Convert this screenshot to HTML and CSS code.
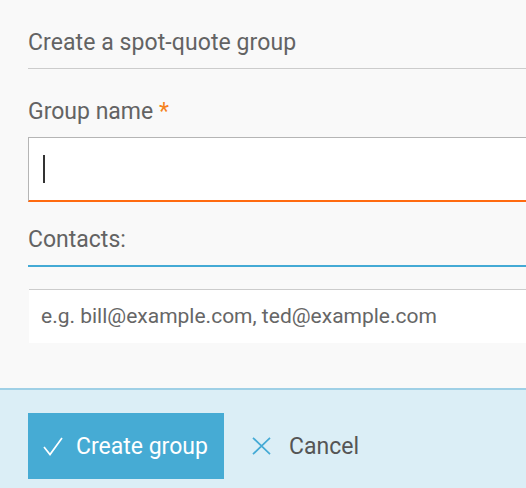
FILE: index.html
```html
<!DOCTYPE html>
<html>
<head>
<meta charset="utf-8">
<link rel="stylesheet" href="styles.css">
</head>
<body>
<div class="dialog">
  <div class="body">
    <h2 class="title">Create a spot-quote group</h2>
    <label class="label">Group name <span class="req">*</span></label>
    <div class="input focused"><span class="caret"></span></div>
    <div class="contacts-label">Contacts:</div>
    <div class="contacts-input">e.g. bill@example.com, ted@example.com</div>
  </div>
  <div class="footer">
    <button class="btn primary">
      <svg width="20" height="19" viewBox="0 0 20 19"><path d="M1 10 L7 17.5 L19 1" fill="none" stroke="#fff" stroke-width="1.7"/></svg>
      <span>Create group</span>
    </button>
    <button class="btn link">
      <svg width="19" height="18" viewBox="0 0 19 18"><path d="M1 0.8 L18 17.2 M18 0.8 L1 17.2" fill="none" stroke="#44aad5" stroke-width="1.7"/></svg>
      <span>Cancel</span>
    </button>
  </div>
</div>
</body>
</html>
```

FILE: styles.css
```css
html, body {
  margin: 0;
  padding: 0;
  background: #f9f9f9;
  font-family: Roboto, "Liberation Sans", sans-serif;
  color: #636363;
}
.dialog {
  width: 526px;
  height: 488px;
  display: flex;
  flex-direction: column;
  overflow: hidden;
}
.body {
  padding: 0 0 0 28px;
  display: flex;
  flex-direction: column;
  height: 388px;
  box-sizing: border-box;
  flex-shrink: 0;
}
.title {
  margin: 0;
  font-weight: 400;
  font-size: 23px;
  line-height: 27px;
  padding-top: 29px;
  padding-bottom: 12px;
  border-bottom: 1px solid #cccccc;
  letter-spacing: 0.08px;
}
.label {
  font-size: 23px;
  line-height: 27px;
  margin-top: 29px;
}
.req {
  color: #f58220;
}
.input {
  margin-top: 12px;
  height: 65px;
  background: #fff;
  border: 1px solid #b5b5b5;
  border-right: none;
  border-bottom: 2px solid #ff6a10;
  box-sizing: border-box;
  display: flex;
  align-items: center;
  padding-left: 14px;
}
.caret {
  width: 2px;
  height: 28px;
  background: #333;
}
.contacts-label {
  font-size: 23px;
  line-height: 27px;
  margin-top: 24px;
  padding-bottom: 12px;
  border-bottom: 2px solid #44aad5;
}
.contacts-input {
  margin-top: 22px;
  margin-left: 1px;
  height: 54px;
  background: #fff;
  border-top: 1px solid #cccccc;
  box-sizing: border-box;
  font-size: 21px;
  line-height: 53px;
  padding-left: 12px;
  color: #666;
}
.footer {
  flex: 1;
  background: #dbeef6;
  border-top: 2px solid #9fd0e6;
  display: flex;
  align-items: flex-start;
  padding: 23px 0 0 28px;
}
.btn {
  font-family: Roboto, "Liberation Sans", sans-serif;
  font-size: 23px;
  border: none;
  display: flex;
  align-items: center;
  cursor: pointer;
  height: 66px;
}
.btn.primary {
  background: #46abd4;
  color: #fff;
  padding: 0 15px 0 15px;
  gap: 13px;
  width: 196px;
}
.btn.link {
  background: transparent;
  color: #555;
  padding: 0 15px 0 28px;
  gap: 18px;
}
```
